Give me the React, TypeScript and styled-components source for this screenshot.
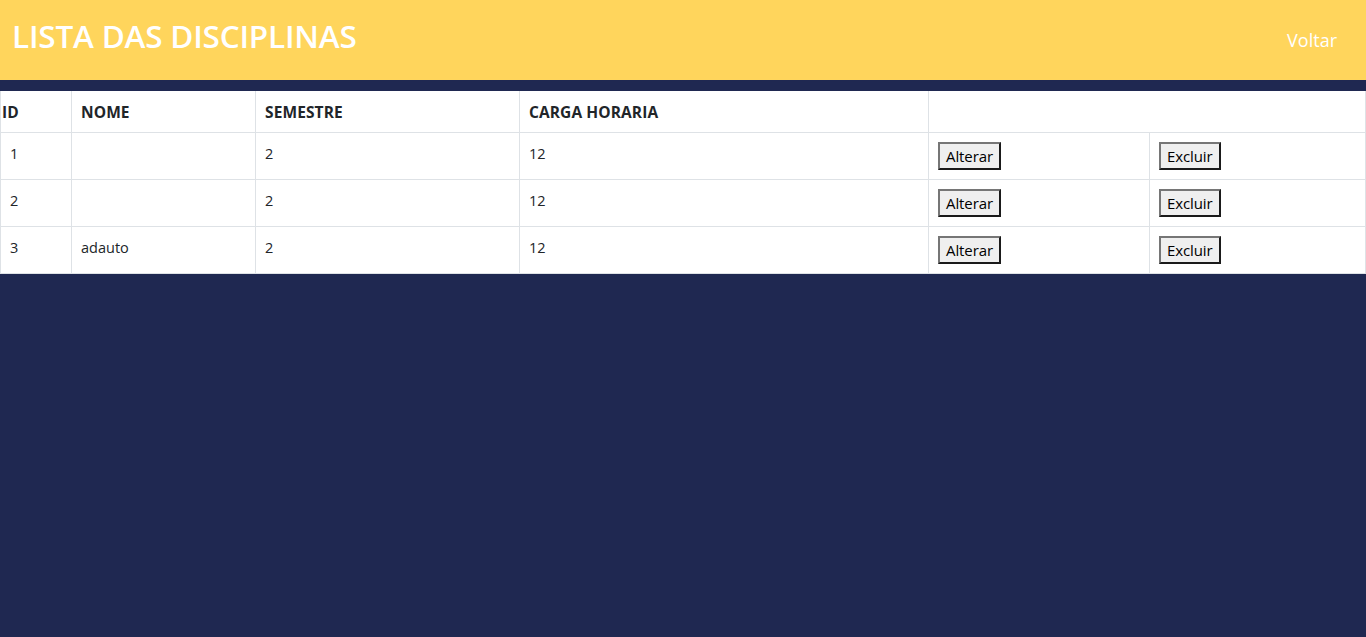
import React from 'react';
import styled, { createGlobalStyle } from 'styled-components';

const GlobalStyle = createGlobalStyle`
  html, body {
    margin: 0;
    padding: 0;
    background: #1f2851;
    font-family: 'Open Sans', 'Noto Sans', sans-serif;
  }
`;

const Page = styled.div`
  min-height: 637px;
  background: #1f2851;
`;

const Header = styled.header`
  display: flex;
  align-items: center;
  justify-content: space-between;
  height: 80px;
  padding: 0 29px 0 12px;
  background: #ffd55c;
  box-sizing: border-box;
`;

const Title = styled.h1`
  margin: 0 0 10px;
  color: #fff;
  font-size: 31.5px;
  font-weight: 600;
  letter-spacing: -0.2px;
`;

const BackLink = styled.a`
  color: #fff;
  font-size: 18px;
  text-decoration: none;
  cursor: pointer;
`;

const Table = styled.table`
  margin-top: 11px;
  width: 100%;
  border-collapse: collapse;
  background: #fff;
  color: #212529;
  font-size: 14.5px;
`;

const HeadCell = styled.th<{ $width?: number; $flush?: boolean }>`
  width: ${p => (p.$width ? `${p.$width}px` : 'auto')};
  height: 41px;
  padding: 2px 8px 0 ${p => (p.$flush ? '1px' : '9px')};
  text-align: left;
  font-weight: 700;
  font-size: 15.5px;
  letter-spacing: 0.1px;
  border: 1px solid #dee2e6;
  border-top: none;
  box-sizing: border-box;
`;

const Cell = styled.td`
  height: 47px;
  padding: 0 8px 4px 9px;
  border: 1px solid #dee2e6;
  box-sizing: border-box;
  vertical-align: middle;
`;

const ActionButton = styled.button`
  font-family: 'Open Sans', 'Noto Sans', sans-serif;
  font-size: 15px;
  color: #000;
  background: #efefef;
  border: 2px solid;
  border-color: #767676 #1a1a1a #1a1a1a #767676;
  padding: 2px 6px;
  margin-top: 5px;
  letter-spacing: -0.1px;
  cursor: pointer;
`;

const rows = [
  { id: 1, nome: '', semestre: 2, carga: 12 },
  { id: 2, nome: '', semestre: 2, carga: 12 },
  { id: 3, nome: 'adauto', semestre: 2, carga: 12 },
];

export default function App() {
  return (
    <Page>
      <GlobalStyle />
      <Header>
        <Title>LISTA DAS DISCIPLINAS</Title>
        <BackLink>Voltar</BackLink>
      </Header>
      <Table>
        <thead>
          <tr>
            <HeadCell $width={71} $flush>ID</HeadCell>
            <HeadCell $width={184}>NOME</HeadCell>
            <HeadCell $width={264}>SEMESTRE</HeadCell>
            <HeadCell $width={409}>CARGA HORARIA</HeadCell>
            <HeadCell colSpan={2} />
          </tr>
        </thead>
        <tbody>
          {rows.map(r => (
            <tr key={r.id}>
              <Cell>{r.id}</Cell>
              <Cell>{r.nome}</Cell>
              <Cell>{r.semestre}</Cell>
              <Cell>{r.carga}</Cell>
              <Cell style={{ width: 221 }}>
                <ActionButton>Alterar</ActionButton>
              </Cell>
              <Cell>
                <ActionButton>Excluir</ActionButton>
              </Cell>
            </tr>
          ))}
        </tbody>
      </Table>
    </Page>
  );
}
